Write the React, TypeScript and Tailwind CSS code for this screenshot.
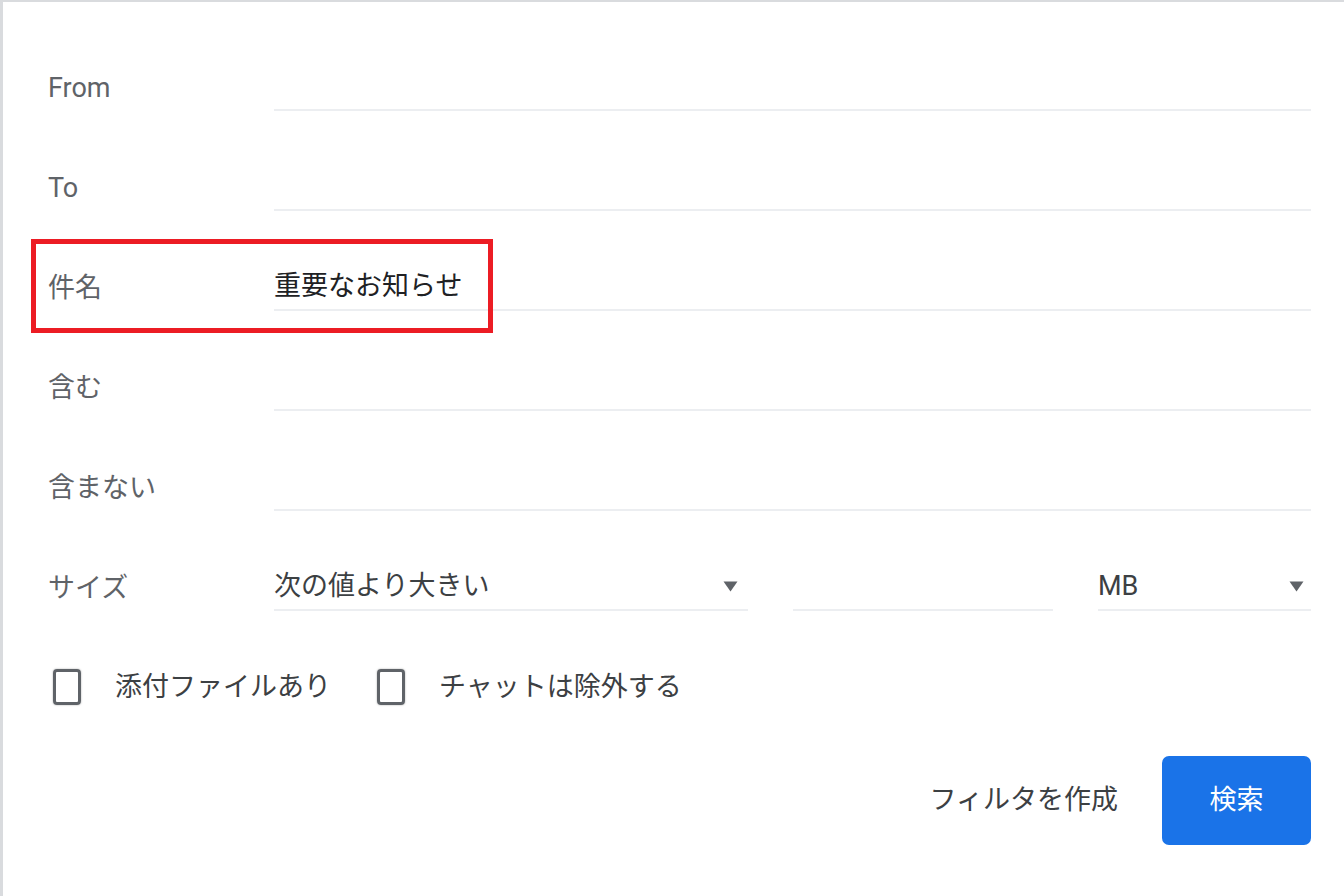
import React from "react";

const font = "font-['Roboto','Noto_Sans_CJK_JP',sans-serif]";

function Caret() {
  return (
    <svg width="15" height="11" viewBox="0 0 15 11" className="shrink-0">
      <path d="M0.5 0.5 H14.5 L7.5 10.5 Z" fill="#5f6368" />
    </svg>
  );
}

function FieldRow({ label, value }: { label: string; value?: string }) {
  return (
    <div className="flex h-[100px] items-end">
      <div className="w-[226px] h-[46px] flex items-center text-[27px] text-[#5f6368] shrink-0">
        {label}
      </div>
      <div className="flex-1 h-[48px] flex items-center border-b-2 border-[#eceef1] text-[27px] text-[#202124]">
        {value}
      </div>
    </div>
  );
}

function Checkbox({ label }: { label: string }) {
  return (
    <div className="flex items-center">
      <div className="w-[28px] h-[36px] rounded-[4px] border-[3px] border-[#5f6368] shadow-[0_0_2px_rgba(0,0,0,0.35)] shrink-0" />
      <span className="ml-[34px] text-[27px] text-[#3c4043]">{label}</span>
    </div>
  );
}

export default function App() {
  return (
    <div className={`${font} relative w-[1344px] h-[896px] bg-white border-l-[3px] border-t-2 border-[#d9dbde] overflow-hidden`}>
      <div className="pl-[45px] pr-[33px] pt-[9px]">
        <FieldRow label="From" />
        <FieldRow label="To" />
        <FieldRow label="件名" value="重要なお知らせ" />
        <FieldRow label="含む" />
        <FieldRow label="含まない" />

        {/* size row */}
        <div className="flex h-[100px] items-end">
          <div className="w-[226px] h-[46px] flex items-center text-[27px] text-[#5f6368] shrink-0">
            サイズ
          </div>
          <div className="w-[474px] h-[48px] flex items-center justify-between pr-[10px] border-b-2 border-[#eceef1] text-[27px] text-[#3c4043]">
            <span>次の値より大きい</span>
            <Caret />
          </div>
          <div className="ml-[45px] w-[260px] h-[48px] border-b-2 border-[#eceef1]" />
          <div className="ml-[45px] flex-1 h-[48px] flex items-center justify-between pr-[7px] border-b-2 border-[#eceef1] text-[27px] text-[#3c4043]">
            <span>MB</span>
            <Caret />
          </div>
        </div>

        {/* checkboxes */}
        <div className="flex items-center gap-[46px] mt-[56px] pl-[5px]">
          <Checkbox label="添付ファイルあり" />
          <Checkbox label="チャットは除外する" />
        </div>

        {/* actions */}
        <div className="flex items-center justify-end mt-[48px]">
          <span className="text-[27px] text-[#3c4043] mr-[44px]">フィルタを作成</span>
          <button className="w-[149px] h-[89px] rounded-[7px] bg-[#1a73e8] text-white text-[27px]">
            検索
          </button>
        </div>
      </div>

      {/* annotation box */}
      <div className="absolute left-[28px] top-[237px] w-[462px] h-[94px] border-[5px] border-[#ec1c24]" />
    </div>
  );
}
